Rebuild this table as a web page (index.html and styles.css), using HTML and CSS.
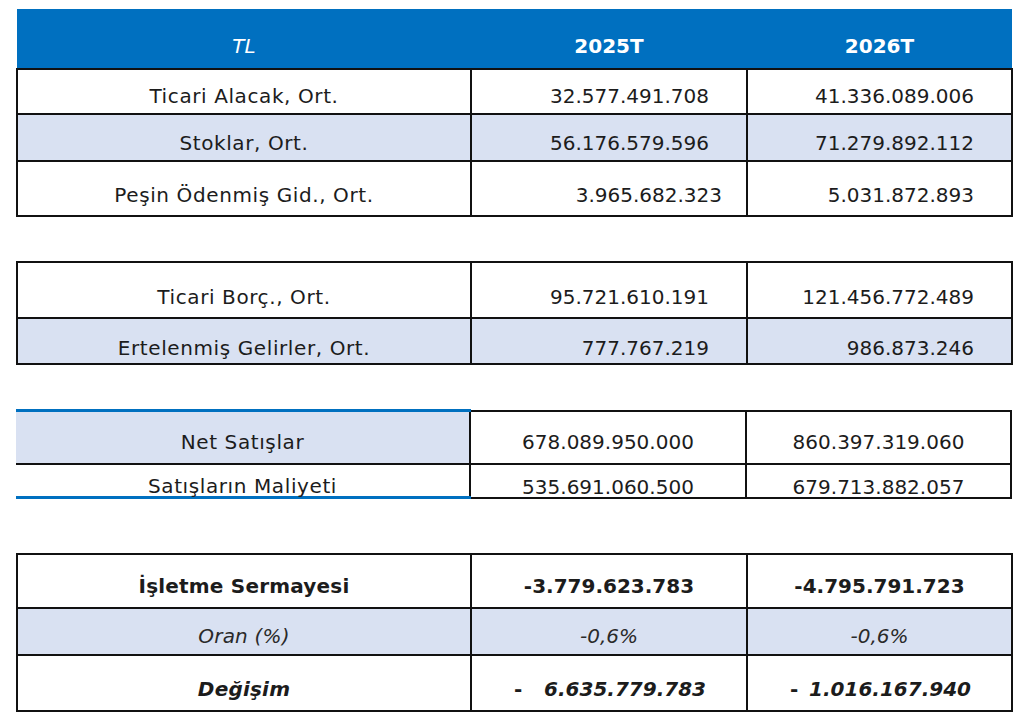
FILE: index.html
```html
<!DOCTYPE html>
<html lang="tr">
<head>
<meta charset="utf-8">
<title>İşletme Sermayesi</title>
<link rel="stylesheet" href="styles.css">
</head>
<body>
<main class="page">
  <table class="grid t1">
    <colgroup><col class="c1"><col class="c2"><col class="c3"></colgroup>
    <thead>
      <tr class="head"><th class="tl">TL</th><th>2025T</th><th>2026T</th></tr>
    </thead>
    <tbody>
      <tr class="h45"><td class="label">Ticari Alacak, Ort.</td><td class="num">32.577.491.708</td><td class="num">41.336.089.006</td></tr>
      <tr class="h47 alt"><td class="label">Stoklar, Ort.</td><td class="num">56.176.579.596</td><td class="num">71.279.892.112</td></tr>
      <tr class="h55 low"><td class="label">Peşin Ödenmiş Gid., Ort.</td><td class="num shift">3.965.682.323</td><td class="num">5.031.872.893</td></tr>
    </tbody>
  </table>

  <table class="grid t2">
    <colgroup><col class="c1"><col class="c2"><col class="c3"></colgroup>
    <tbody>
      <tr class="h56 top"><td class="label">Ticari Borç., Ort.</td><td class="num">95.721.610.191</td><td class="num">121.456.772.489</td></tr>
      <tr class="h46 alt bottom"><td class="label">Ertelenmiş Gelirler, Ort.</td><td class="num">777.767.219</td><td class="num">986.873.246</td></tr>
    </tbody>
  </table>

  <table class="grid t3">
    <colgroup><col class="c1"><col class="c2"><col class="c3"></colgroup>
    <tbody>
      <tr class="h53 sales"><td class="label first">Net Satışlar</td><td class="center">678.089.950.000</td><td class="center">860.397.319.060</td></tr>
      <tr class="h34 cost"><td class="label last">Satışların Maliyeti</td><td class="center">535.691.060.500</td><td class="center">679.713.882.057</td></tr>
    </tbody>
  </table>

  <table class="grid t4">
    <colgroup><col class="c1"><col class="c2"><col class="c3"></colgroup>
    <tbody>
      <tr class="h54 strong"><td class="label">İşletme Sermayesi</td><td class="center">-3.779.623.783</td><td class="center">-4.795.791.723</td></tr>
      <tr class="h47 alt ratio"><td class="label">Oran (%)</td><td class="center">-0,6%</td><td class="center">-0,6%</td></tr>
      <tr class="h56 change"><td class="label">Değişim</td><td><span class="acc"><span class="dash">-</span><span>6.635.779.783</span></span></td><td><span class="acc"><span class="dash">-</span><span>1.016.167.940</span></span></td></tr>
    </tbody>
  </table>
</main>
</body>
</html>
```

FILE: styles.css
```css
html, body {
  margin: 0;
  padding: 0;
  background: #ffffff;
}

body {
  font-family: "DejaVu Sans", "Open Sans", "Liberation Sans", sans-serif;
  font-size: 20px;
  color: #1c1c1c;
}

.page {
  display: flex;
  flex-direction: column;
  align-items: flex-start;
  padding: 9px 0 0 16px;
}

.grid {
  border-collapse: collapse;
  table-layout: fixed;
  width: 995px;
}

.c1 { width: 454px; }
.c2 { width: 276px; }
.c3 { width: 265px; }

.grid td {
  border: 2px solid #111111;
  padding: 0 0 5px 0;
  vertical-align: bottom;
  line-height: 24px;
  white-space: nowrap;
}

.label {
  text-align: center;
  letter-spacing: 0.6px;
}
.strong .label,
.change .label,
.ratio .label { letter-spacing: 0.2px; }

.num { text-align: right; padding-right: 37px !important; }
.num.shift { padding-right: 24px !important; }
.center { text-align: center; }

.alt td { background: #d9e1f2; }

/* header */
.head { height: 60px; }
.head th {
  background: #0070c0;
  color: #ffffff;
  padding: 0 0 10px 0;
  vertical-align: bottom;
  font-weight: 700;
  font-size: 20px;
  line-height: 24px;
  border: 0;
  border-bottom: 2px solid #111111;
}
.head th.tl {
  font-style: italic;
  font-weight: 400;
}

.h34 { height: 34px; }
.h45 { height: 45px; }
.h46 { height: 46px; }
.h47 { height: 47px; }
.h53 { height: 53px; }
.h54 { height: 54px; }
.h55 { height: 55px; }
.h56 { height: 56px; }

.low td { padding-bottom: 8px; }

.t2 { margin-top: 44px; }
.t3 { margin-top: 44px; }
.t4 { margin-top: 54px; }

.t2 .top td { padding-bottom: 8px; }
.t2 .bottom td { padding-bottom: 3px; }

/* third table: blue rules on the label column */
.t3 .sales td { padding-bottom: 9px; }
.t3 .cost td {
  padding-bottom: 0;
  line-height: 20px;
}
.t3 td.first {
  background: #d9e1f2;
  border-left: 0;
  border-top: 3px solid #0070c0;
}
.t3 td.last {
  border-left: 0;
  border-bottom: 3px solid #0070c0;
}

/* fourth table */
.t4 td { padding-bottom: 9px; }
.strong td { font-weight: 700; }
.ratio td {
  font-style: italic;
  padding-bottom: 6px;
  color: #2a2a2a;
}
.change td {
  font-weight: 700;
  font-style: italic;
  padding-bottom: 9px;
}
.acc {
  display: flex;
  justify-content: space-between;
  padding: 0 40px 0 42px;
}
.dash { font-style: normal; }
```
